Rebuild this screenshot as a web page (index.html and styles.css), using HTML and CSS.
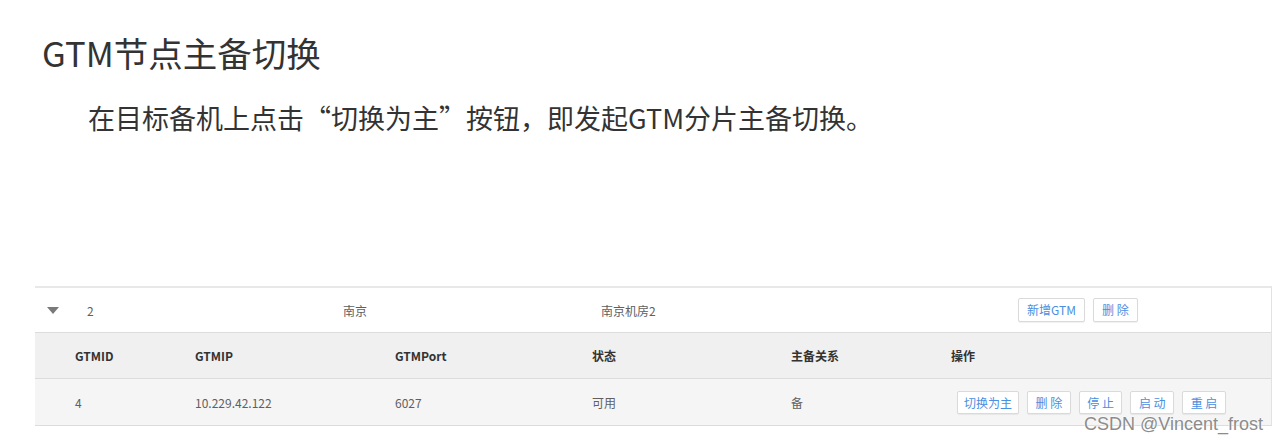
FILE: index.html
```html
<!DOCTYPE html>
<html lang="zh-CN">
<head>
<meta charset="utf-8">
<title>GTM节点主备切换</title>
<link rel="stylesheet" href="styles.css">
</head>
<body>
<div class="page">
  <h1 class="title">GTM节点主备切换</h1>
  <p class="subtitle">在目标备机上点击“切换为主”按钮，即发起GTM分片主备切换。</p>

  <div class="table">
    <div class="row group">
      <div class="c-arrow"><span class="tri"></span></div>
      <div class="g-id">2</div>
      <div class="g-city">南京</div>
      <div class="g-room">南京机房2</div>
      <div class="ops">
        <button class="btn">新增GTM</button>
        <button class="btn">删 除</button>
      </div>
    </div>
    <div class="row head">
      <div class="c1">GTMID</div>
      <div class="c2">GTMIP</div>
      <div class="c3">GTMPort</div>
      <div class="c4">状态</div>
      <div class="c5">主备关系</div>
      <div class="c6">操作</div>
    </div>
    <div class="row data">
      <div class="c1">4</div>
      <div class="c2">10.229.42.122</div>
      <div class="c3">6027</div>
      <div class="c4">可用</div>
      <div class="c5">备</div>
      <div class="c6 ops">
        <button class="btn">切换为主</button>
        <button class="btn btn-short">删 除</button>
        <button class="btn btn-short">停 止</button>
        <button class="btn btn-short">启 动</button>
        <button class="btn btn-short">重 启</button>
      </div>
    </div>
  </div>

  <div class="watermark">CSDN @Vincent_frost</div>
</div>
</body>
</html>
```

FILE: styles.css
```css
html, body {
  margin: 0;
  padding: 0;
  background: #ffffff;
}
body {
  width: 1280px;
  height: 441px;
  overflow: hidden;
  font-family: "Noto Sans CJK SC", "Noto Sans", sans-serif;
}
.page {
  position: relative;
  padding-top: 32px;
  height: 441px;
  box-sizing: border-box;
}
.title {
  margin: 0 0 0 42px;
  font-size: 34.5px;
  line-height: 40px;
  font-weight: 400;
  color: #333333;
}
.subtitle {
  margin: 26px 0 0 88px;
  font-size: 27px;
  line-height: 40px;
  color: #333333;
}
.table {
  margin: 148px 0 0 35px;
  width: 1237px;
  border-top: 2px solid #e8e8e8;
  border-right: 1px solid #e2e2e2;
  box-sizing: border-box;
  font-size: 12px;
  color: #606060;
}
.row {
  display: flex;
  align-items: center;
  box-sizing: border-box;
  border-bottom: 1px solid #dcdcdc;
}
.group {
  height: 45px;
  background: #ffffff;
}
.head {
  height: 46px;
  background: #f0f0f0;
  padding-left: 40px;
  font-weight: 700;
  color: #333333;
}
.data {
  height: 47px;
  background: #f5f5f5;
  padding-left: 40px;
}
.c-arrow {
  width: 52px;
  padding-left: 12px;
  box-sizing: border-box;
  display: flex;
  align-items: center;
}
.tri {
  width: 0;
  height: 0;
  border-left: 6px solid transparent;
  border-right: 6px solid transparent;
  border-top: 7px solid #7a7a7a;
}
.g-id { width: 256px; }
.g-city { width: 258px; }
.g-room { width: 417px; }
.c1 { width: 120px; }
.c2 { width: 200px; }
.c3 { width: 197px; }
.c4 { width: 199px; }
.c5 { width: 160px; }
.c6 { flex: 1; }
.ops {
  display: flex;
  gap: 8px;
}
.data .ops {
  padding-left: 6px;
}
.btn {
  height: 24px;
  padding: 0 8px;
  margin: 0;
  background: #ffffff;
  border: 1px solid #dadada;
  border-radius: 2px;
  box-shadow: 0 1px 1px rgba(0, 0, 0, 0.06);
  font-family: "Noto Sans CJK SC", "Noto Sans", sans-serif;
  font-size: 12px;
  line-height: 22px;
  color: #4a8fe0;
  white-space: pre;
}
.data .btn {
  height: 23px;
  line-height: 21px;
  padding: 0 6px;
}
.data .btn-short {
  padding: 0 7.5px;
}
.watermark {
  position: absolute;
  top: 415px;
  right: 17px;
  font-family: "Liberation Sans", Arial, sans-serif;
  font-size: 18px;
  line-height: 18px;
  color: #8c8c8c;
  text-shadow: 0 0 2px #ffffff, 0 0 2px #ffffff;
}
```
